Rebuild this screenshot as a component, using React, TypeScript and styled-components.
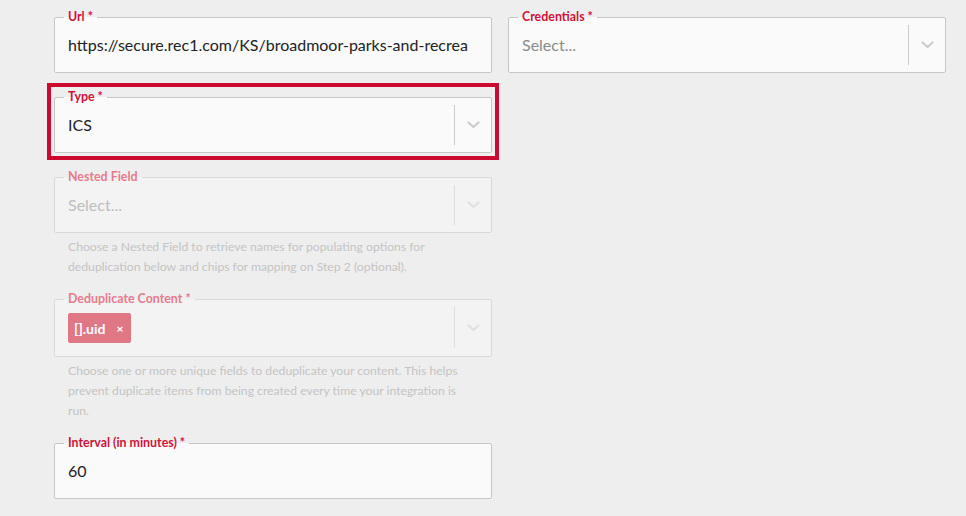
import React from "react";
import styled, { createGlobalStyle, css } from "styled-components";

const GlobalStyle = createGlobalStyle`
  html, body {
    margin: 0;
    padding: 0;
    background: #eeeeee;
    font-family: Lato, "Open Sans", Arial, sans-serif;
  }
  * { box-sizing: border-box; }
`;

const Page = styled.div`
  width: 966px;
  height: 516px;
  overflow: hidden;
  background: #eeeeee;
  padding: 3px 0 0 47px;
`;

const Grid = styled.div`
  display: grid;
  grid-template-columns: 452px 452px;
  column-gap: 2px;
  row-gap: 3px;
  align-items: start;
`;

const Cell = styled.div<{ $highlight?: boolean }>`
  padding: 7px;
  ${(p) =>
    p.$highlight &&
    css`
      border: 4px solid #cc0a2f;
      padding: 3px;
    `}
`;

const Field = styled.fieldset<{ $disabled?: boolean }>`
  margin: 0;
  min-width: 0;
  padding: 0 0 0 13px;
  border: 1px solid ${(p) => (p.$disabled ? "#d8d8d8" : "#c6c6c6")};
  border-radius: 2px;
  background: ${(p) => (p.$disabled ? "#f3f3f3" : "#fafafa")};
`;

const Legend = styled.legend<{ $disabled?: boolean }>`
  margin-left: -4px;
  padding: 0 4px;
  font-size: 12.4px;
  line-height: 14px;
  font-weight: 700;
  color: ${(p) => (p.$disabled ? "#e77a8c" : "#cf1239")};
`;

const Control = styled.div<{ $h?: number; $mb?: number }>`
  display: flex;
  align-items: center;
  height: ${(p) => p.$h ?? 40}px;
  margin-top: 1px;
  margin-bottom: ${(p) => p.$mb ?? 7}px;
`;

const Value = styled.div<{ $tone?: "value" | "placeholder" | "disabled" }>`
  flex: 1;
  min-width: 0;
  overflow: hidden;
  white-space: nowrap;
  padding-right: 14px;
  font-size: 16px;
  line-height: 20px;
  color: ${(p) =>
    p.$tone === "placeholder" ? "#8a8a8a" : p.$tone === "disabled" ? "#bdbdbd" : "#222222"};
`;

const Values = styled.div`
  flex: 1;
  align-self: flex-start;
  display: flex;
  padding-top: 6px;
`;

const Chip = styled.div`
  display: flex;
  align-items: center;
  height: 30px;
  padding: 0 8px 0 6px;
  gap: 11px;
  border-radius: 2px;
  background: #e07785;
  color: #ffffff;
  font-size: 14px;
  font-weight: 700;
`;

const ChipX = styled.span`
  font-size: 12px;
  font-weight: 700;
`;

const Separator = styled.span<{ $disabled?: boolean }>`
  align-self: stretch;
  width: 1px;
  background: ${(p) => (p.$disabled ? "#dedede" : "#cccccc")};
`;

const Indicator = styled.div`
  width: 36px;
  display: flex;
  justify-content: center;
  align-items: center;
`;

const Help = styled.div`
  margin: 4px 0 -2px;
  padding: 0 14px;
  font-size: 12.2px;
  line-height: 20px;
  color: #c4c4c4;
`;

const Chevron = ({ disabled }: { disabled?: boolean }) => (
  <svg width="13" height="8" viewBox="0 0 13 8">
    <path
      d="M1.5 1.5 L6.5 6 L11.5 1.5"
      fill="none"
      stroke={disabled ? "#e0e0e0" : "#cccccc"}
      strokeWidth="2.2"
      strokeLinecap="round"
      strokeLinejoin="round"
    />
  </svg>
);

const SelectEnd = ({ disabled }: { disabled?: boolean }) => (
  <>
    <Separator $disabled={disabled} />
    <Indicator>
      <Chevron disabled={disabled} />
    </Indicator>
  </>
);

export default function App() {
  return (
    <>
      <GlobalStyle />
      <Page>
        <Grid>
          <Cell>
            <Field>
              <Legend>Url *</Legend>
              <Control>
                <Value>https://secure.rec1.com/KS/broadmoor-parks-and-recrea</Value>
              </Control>
            </Field>
          </Cell>
          <Cell>
            <Field>
              <Legend>Credentials *</Legend>
              <Control>
                <Value $tone="placeholder">Select...</Value>
                <SelectEnd />
              </Control>
            </Field>
          </Cell>

          <Cell $highlight>
            <Field>
              <Legend>Type *</Legend>
              <Control>
                <Value>ICS</Value>
                <SelectEnd />
              </Control>
            </Field>
          </Cell>
          <div />

          <Cell>
            <Field $disabled>
              <Legend $disabled>Nested Field</Legend>
              <Control>
                <Value $tone="disabled">Select...</Value>
                <SelectEnd disabled />
              </Control>
            </Field>
            <Help>
              Choose a Nested Field to retrieve names for populating options for deduplication below and
              chips for mapping on Step 2 (optional).
            </Help>
          </Cell>
          <div />

          <Cell>
            <Field $disabled>
              <Legend $disabled>Deduplicate Content *</Legend>
              <Control $h={41} $mb={8}>
                <Values>
                  <Chip>
                    <span>[].uid</span>
                    <ChipX>×</ChipX>
                  </Chip>
                </Values>
                <SelectEnd disabled />
              </Control>
            </Field>
            <Help>
              Choose one or more unique fields to deduplicate your content. This helps prevent duplicate
              items from being created every time your integration is run.
            </Help>
          </Cell>
          <div />

          <Cell>
            <Field>
              <Legend>Interval (in minutes) *</Legend>
              <Control>
                <Value>60</Value>
              </Control>
            </Field>
          </Cell>
          <div />
        </Grid>
      </Page>
    </>
  );
}
